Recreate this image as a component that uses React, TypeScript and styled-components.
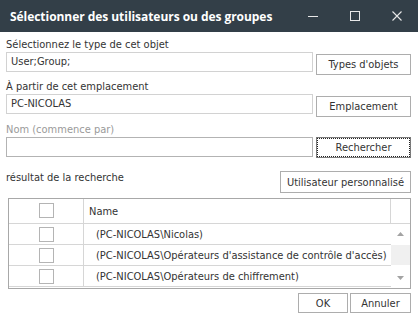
import React from "react";
import styled, { createGlobalStyle } from "styled-components";

const Global = createGlobalStyle`
  html, body { margin: 0; padding: 0; background: #fff; }
  body {
    font-family: "DejaVu Sans Condensed", "DejaVu Sans", sans-serif;
    font-size: 11px;
    color: #333;
  }
  * { box-sizing: border-box; }
`;

const Window = styled.div`
  width: 418px;
  height: 321px;
  background: #fff;
  display: flex;
  flex-direction: column;
  overflow: hidden;
`;

const TitleBar = styled.div`
  height: 32px;
  flex: none;
  background: #333f48;
  color: #fff;
  display: flex;
  align-items: center;
  padding-left: 10px;
`;

const Title = styled.div`
  flex: 1;
  font-family: "Open Sans", sans-serif;
  font-weight: 700;
  font-size: 12px;
  letter-spacing: -0.05px;
  white-space: nowrap;
`;

const WinControls = styled.div`
  display: flex;
  height: 100%;
`;

const WinButton = styled.div`
  width: 42px;
  height: 100%;
  display: flex;
  align-items: center;
  justify-content: center;
  color: #e8e8e8;
`;

const Body = styled.div`
  flex: 1;
  display: flex;
  flex-direction: column;
  padding: 6px 7px 0 6px;
`;

const FieldBlock = styled.div<{ $mb: number }>`
  display: grid;
  grid-template-columns: 1fr 95px;
  column-gap: 3px;
  align-items: start;
  margin-bottom: ${(p) => p.$mb}px;
`;

const Label = styled.div<{ $muted?: boolean }>`
  grid-column: 1 / -1;
  height: 14px;
  line-height: 14px;
  white-space: nowrap;
  color: ${(p) => (p.$muted ? "#9a9a9a" : "#333")};
`;

const TextBox = styled.div<{ $dark?: boolean }>`
  height: 20px;
  line-height: 18px;
  padding-left: 4px;
  border: 1px solid ${(p) => (p.$dark ? "#b3b3b3" : "#d2d2d2")};
  background: #fff;
  color: #333;
  white-space: nowrap;
`;

const Button = styled.div<{ $top?: number; $h?: number; $focus?: boolean; $w?: number }>`
  margin-top: ${(p) => p.$top ?? 0}px;
  height: ${(p) => p.$h ?? 21}px;
  ${(p) => (p.$w ? `width: ${p.$w}px;` : "")}
  border: 1px solid ${(p) => (p.$focus ? "#7a7a7a" : "#adadad")};
  outline: ${(p) => (p.$focus ? "1px dotted #222" : "none")};
  outline-offset: -2px;
  background: #fff;
  color: #333;
  display: flex;
  align-items: center;
  justify-content: center;
  white-space: nowrap;
`;

const ResultRow = styled.div`
  display: flex;
  justify-content: space-between;
  align-items: flex-start;
  margin-top: 13px;
`;

const ResultLabel = styled.div`
  line-height: 14px;
  color: #333;
`;

const Table = styled.div`
  margin: 5px 0 0 2px;
  height: 91px;
  border: 1px solid #a8a8a8;
  display: flex;
  flex-direction: column;
  overflow: hidden;
`;

const HeaderRow = styled.div`
  flex: none;
  height: 25px;
  display: grid;
  grid-template-columns: 75px 1fr 19px;
  border-bottom: 1px solid #d6d6d6;
`;

const CheckCell = styled.div`
  border-right: 1px solid #d6d6d6;
  display: flex;
  align-items: center;
  justify-content: center;
`;

const NameCell = styled.div<{ $indent: number; $sep?: boolean }>`
  display: flex;
  align-items: center;
  padding-left: ${(p) => p.$indent}px;
  white-space: nowrap;
  overflow: hidden;
  ${(p) => (p.$sep ? "border-right: 1px solid #d6d6d6;" : "")}
`;

const Checkbox = styled.div<{ $dy?: number }>`
  width: 15px;
  height: 15px;
  border: 1px solid #b4b4b4;
  background: #fff;
  margin-top: ${(p) => p.$dy ?? 0}px;
`;

const ListArea = styled.div`
  flex: 1;
  display: flex;
  min-height: 0;
`;

const Rows = styled.div`
  flex: 1;
  display: flex;
  flex-direction: column;
`;

const Row = styled.div`
  flex: none;
  height: 21px;
  display: grid;
  grid-template-columns: 75px 1fr;
  border-bottom: 1px solid #d6d6d6;
`;

const ScrollBar = styled.div`
  width: 19px;
  flex: none;
  display: flex;
  flex-direction: column;
`;

const ScrollArrow = styled.div`
  height: 20px;
  flex: none;
  display: flex;
  align-items: center;
  justify-content: center;
`;

const Thumb = styled.div`
  height: 20px;
  margin-top: 1px;
  flex: none;
  background: #f0f0f0;
`;

const Spacer = styled.div`
  flex: 1;
`;

const Footer = styled.div`
  display: flex;
  justify-content: flex-end;
  gap: 2px;
  margin-top: 4px;
`;

const Tri = ({ up }: { up?: boolean }) => (
  <svg width="7" height="4" viewBox="0 0 7 4">
    <path d={up ? "M0 4 L3.5 0 L7 4 Z" : "M0 0 L3.5 4 L7 0 Z"} fill="#a3a3a3" />
  </svg>
);

const rows = [
  "(PC-NICOLAS\\Nicolas)",
  "(PC-NICOLAS\\Opérateurs d'assistance de contrôle d'accès)",
  "(PC-NICOLAS\\Opérateurs de chiffrement)",
];

export default function App() {
  return (
    <>
      <Global />
      <Window>
        <TitleBar>
          <Title>Sélectionner des utilisateurs ou des groupes</Title>
          <WinControls>
            <WinButton>
              <svg width="10" height="10" viewBox="0 0 10 10">
                <path d="M0 5.5 H10" stroke="currentColor" strokeWidth="1" />
              </svg>
            </WinButton>
            <WinButton>
              <svg width="10" height="10" viewBox="0 0 10 10">
                <rect x="0.5" y="0.5" width="9" height="9" fill="none" stroke="currentColor" strokeWidth="1" />
              </svg>
            </WinButton>
            <WinButton>
              <svg width="10" height="10" viewBox="0 0 10 10">
                <path d="M0.5 0.5 L9.5 9.5 M9.5 0.5 L0.5 9.5" stroke="currentColor" strokeWidth="1.1" />
              </svg>
            </WinButton>
          </WinControls>
        </TitleBar>
        <Body>
          <FieldBlock $mb={5}>
            <Label>Sélectionnez le type de cet objet</Label>
            <TextBox>User;Group;</TextBox>
            <Button $top={2}>Types d'objets</Button>
          </FieldBlock>
          <FieldBlock $mb={6}>
            <Label>À partir de cet emplacement</Label>
            <TextBox>PC-NICOLAS</TextBox>
            <Button $top={2}>Emplacement</Button>
          </FieldBlock>
          <FieldBlock $mb={0}>
            <Label $muted>Nom (commence par)</Label>
            <TextBox $dark />
            <Button $focus>Rechercher</Button>
          </FieldBlock>
          <ResultRow>
            <ResultLabel>résultat de la recherche</ResultLabel>
            <Button $h={22} $w={131}>Utilisateur personnalisé</Button>
          </ResultRow>
          <Table>
            <HeaderRow>
              <CheckCell>
                <Checkbox $dy={-1} />
              </CheckCell>
              <NameCell $indent={5} $sep>Name</NameCell>
              <div />
            </HeaderRow>
            <ListArea>
              <Rows>
                {rows.map((r) => (
                  <Row key={r}>
                    <CheckCell>
                      <Checkbox />
                    </CheckCell>
                    <NameCell $indent={12}>{r}</NameCell>
                  </Row>
                ))}
              </Rows>
              <ScrollBar>
                <ScrollArrow>
                  <Tri up />
                </ScrollArrow>
                <Thumb />
                <Spacer />
                <ScrollArrow>
                  <Tri />
                </ScrollArrow>
              </ScrollBar>
            </ListArea>
          </Table>
          <Footer>
            <Button $h={20} $w={50}>OK</Button>
            <Button $h={20} $w={61}>Annuler</Button>
          </Footer>
        </Body>
      </Window>
    </>
  );
}
